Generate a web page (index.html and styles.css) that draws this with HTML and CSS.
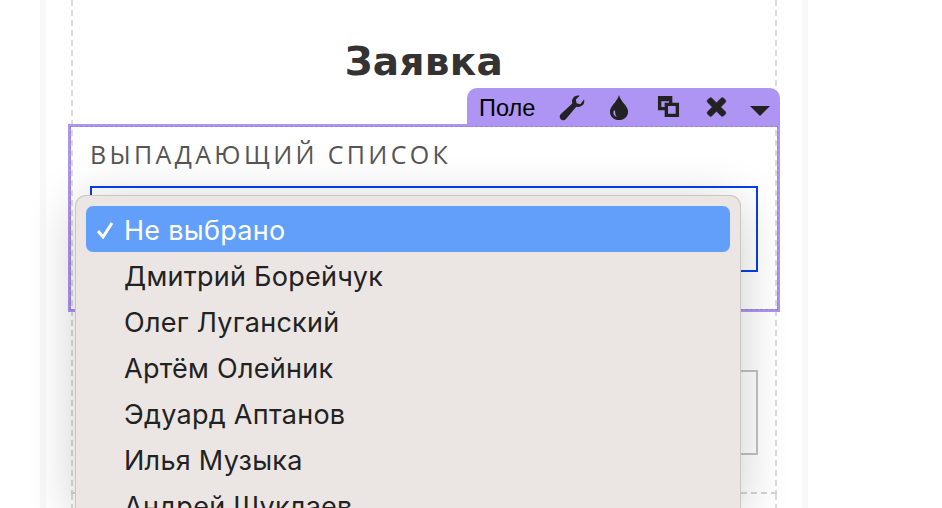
FILE: index.html
```html
<!DOCTYPE html>
<html lang="ru">
<head>
<meta charset="utf-8">
<title>Заявка</title>
<link rel="stylesheet" href="styles.css">
</head>
<body>
<div class="sheet">
  <div class="block block-form">
    <h1 class="title">Заявка</h1>
    <div class="field field-active">
      <div class="toolbar">
        <span class="toolbar-name">Поле</span>
        <svg class="tool tool-wrench" viewBox="0 0 28 28"><path d="M27 5.600c.5 1.600.4 3.700-.8 5.300-1.800 2.300-4.700 3-7.300 2.300L8.300 25.800c-1.500 1.700-3.900 1.800-5.400.4-1.600-1.500-1.500-3.900.1-5.400l11.800-10.900c-.8-2.600 0-5.500 2.300-7.200 1.600-1.200 3.700-1.500 5.400-1l-4 4 .8 3.800 3.800 1z"/></svg>
        <svg class="tool tool-drop" viewBox="0 0 24 28"><path fill-rule="evenodd" d="M12 1c1 4 3.600 6.800 6 10 1.800 2.400 3.400 4.500 3.400 7.400C21.400 23.500 17.200 27 12 27S2.600 23.500 2.600 18.400c0-2.900 1.600-5 3.400-7.400 2.400-3.200 5-6 6-10zM6.500 17.500c-.6 1.500-.4 3.400.8 4.800.7.800 1.700 1.400 2.700 1.500-1.300-1.300-2.300-3.600-2-6.300-.5-.5-1.100-.5-1.500 0z"/></svg>
        <svg class="tool tool-clone" viewBox="0 0 24 24"><path fill-rule="evenodd" d="M1 1h15v7h7v15H8v-7H1zM4.500 6.500v6H8V8h4.500V6.500zM11.500 11.500v8h8v-8z"/></svg>
        <svg class="tool tool-close" viewBox="0 0 24 24"><path d="M7 2.500l5 5 5-5c.8-.8 2-.8 2.800 0l1.700 1.700c.8.800.8 2 0 2.800l-5 5 5 5c.8.800.8 2 0 2.800l-1.700 1.700c-.8.800-2 .8-2.800 0l-5-5-5 5c-.8.800-2 .8-2.800 0l-1.700-1.700c-.8-.8-.8-2 0-2.800l5-5-5-5c-.8-.8-.8-2 0-2.800l1.700-1.700c.8-.8 2-.8 2.800 0z"/></svg>
        <svg class="tool tool-caret" viewBox="0 0 20 10"><path d="M0 0h20L10 10z"/></svg>
      </div>
      <div class="field-label">Выпадающий список</div>
      <div class="select select-focus"></div>
    </div>
    <div class="field field-plain">
      <div class="select select-idle"></div>
    </div>
  </div>
  <div class="block block-next"></div>
</div>
<ul class="menu">
  <li class="menu-item menu-item-selected"><svg class="check" viewBox="0 0 18 18"><path d="M2 10l5 6L16 2"/></svg>Не выбрано</li>
  <li class="menu-item">Дмитрий Борейчук</li>
  <li class="menu-item">Олег Луганский</li>
  <li class="menu-item">Артём Олейник</li>
  <li class="menu-item">Эдуард Аптанов</li>
  <li class="menu-item">Илья Музыка</li>
  <li class="menu-item">Андрей Шуклаев</li>
</ul>
</body>
</html>
```
FILE: styles.css
```css
* { box-sizing: border-box; }
html, body { margin: 0; height: 100%; overflow: hidden; background: #fff; }
.sheet {
  width: 768px;
  height: 508px;
  margin-left: 40px;
  padding: 0 25px;
  border-left: 6px solid #f8f8f8;
  border-right: 6px solid #f8f8f8;
  display: flex;
  flex-direction: column;
}
.block {
  width: 706px;
  background-image:
    repeating-linear-gradient(to bottom, #dcdcdc 0 6px, transparent 6px 10px),
    repeating-linear-gradient(to bottom, #dcdcdc 0 6px, transparent 6px 10px);
  background-size: 2px 100%, 2px 100%;
  background-position: left top, right top;
  background-repeat: no-repeat;
}
.block-form { height: 494px; position: relative; }
.block-form::after {
  content: "";
  position: absolute;
  left: 0; right: 0; bottom: 0;
  height: 2px;
  background: repeating-linear-gradient(to right, #d4d4d4 0 6px, transparent 6px 10px);
}
.block-next { flex: 1; }
.title {
  margin: 0;
  height: 124px;
  padding-top: 38px;
  text-align: center;
  font: 700 39px/48px "DejaVu Sans", sans-serif;
  letter-spacing: .3px;
  color: #333;
}
.field { margin: 0 -3px 0 -3px; position: relative; }
.field-active {
  height: 188px;
  border: 3px solid #ae94f3;
  padding: 12px 19px 0;
}
.field-active::before {
  content: "";
  position: absolute;
  inset: -1px;
  border: 1px dashed rgba(120,110,150,.4);
  pointer-events: none;
}
.toolbar {
  position: absolute;
  right: -3px;
  top: -39px;
  width: 313px;
  height: 36px;
  background: #ae94f3;
  border-radius: 10px 10px 0 0;
  display: flex;
  align-items: center;
  padding-left: 12px;
}
.toolbar-name { font: 23.500px/36px "Liberation Sans", sans-serif; color: #000; width: 79px; padding-top: 4px; }
.tool { fill: #222; display: block; margin-top: 1px; }
.tool-wrench { width: 27px; height: 27px; margin-right: 22px; margin-top: 3px; }
.tool-drop { width: 24px; height: 27px; margin-right: 26px; margin-top: 2px; }
.tool-clone { width: 23px; height: 23px; margin-right: 25px; }
.tool-close { width: 23px; height: 22px; margin-right: 22px; margin-top: 2px; stroke: #222; stroke-width: .8; }
.tool-caret { width: 20px; height: 10px; margin-top: 9px; }
.field-label {
  font: 400 25px/30px "Open Sans", sans-serif;
  color: #555;
  text-transform: uppercase;
  letter-spacing: 3.35px;
}
.select { height: 86px; margin-top: 17px; }
.select-focus { border: 2px solid #0640ee; }
.field-plain { padding: 58px 22px 0 22px; }
.select-idle { margin-top: 0; height: 85px; border: 2px solid #c2c2c2; }
.menu {
  position: absolute;
  left: 75px;
  top: 195px;
  width: 666px;
  height: 313px;
  margin: 0;
  padding: 10px 10px;
  list-style: none;
  background: #ebe6e3;
  border: 1px solid #c9c6c4;
  border-bottom: 0;
  border-radius: 11px 11px 0 0;
  box-shadow: 0 8px 50px rgba(0,0,0,.2);
  overflow: hidden;
}
.menu-item {
  height: 46px;
  padding-left: 38px;
  position: relative;
  font: 400 27px/49px Inter, sans-serif;
  letter-spacing: .27px;
  color: #222;
}
.menu-item-selected { background: #619ffb; color: #fff; border-radius: 7px; }
.check {
  position: absolute;
  left: 10px;
  top: 15px;
  width: 18px;
  height: 18px;
  fill: none;
  stroke: #fff;
  stroke-width: 3;
}
```
